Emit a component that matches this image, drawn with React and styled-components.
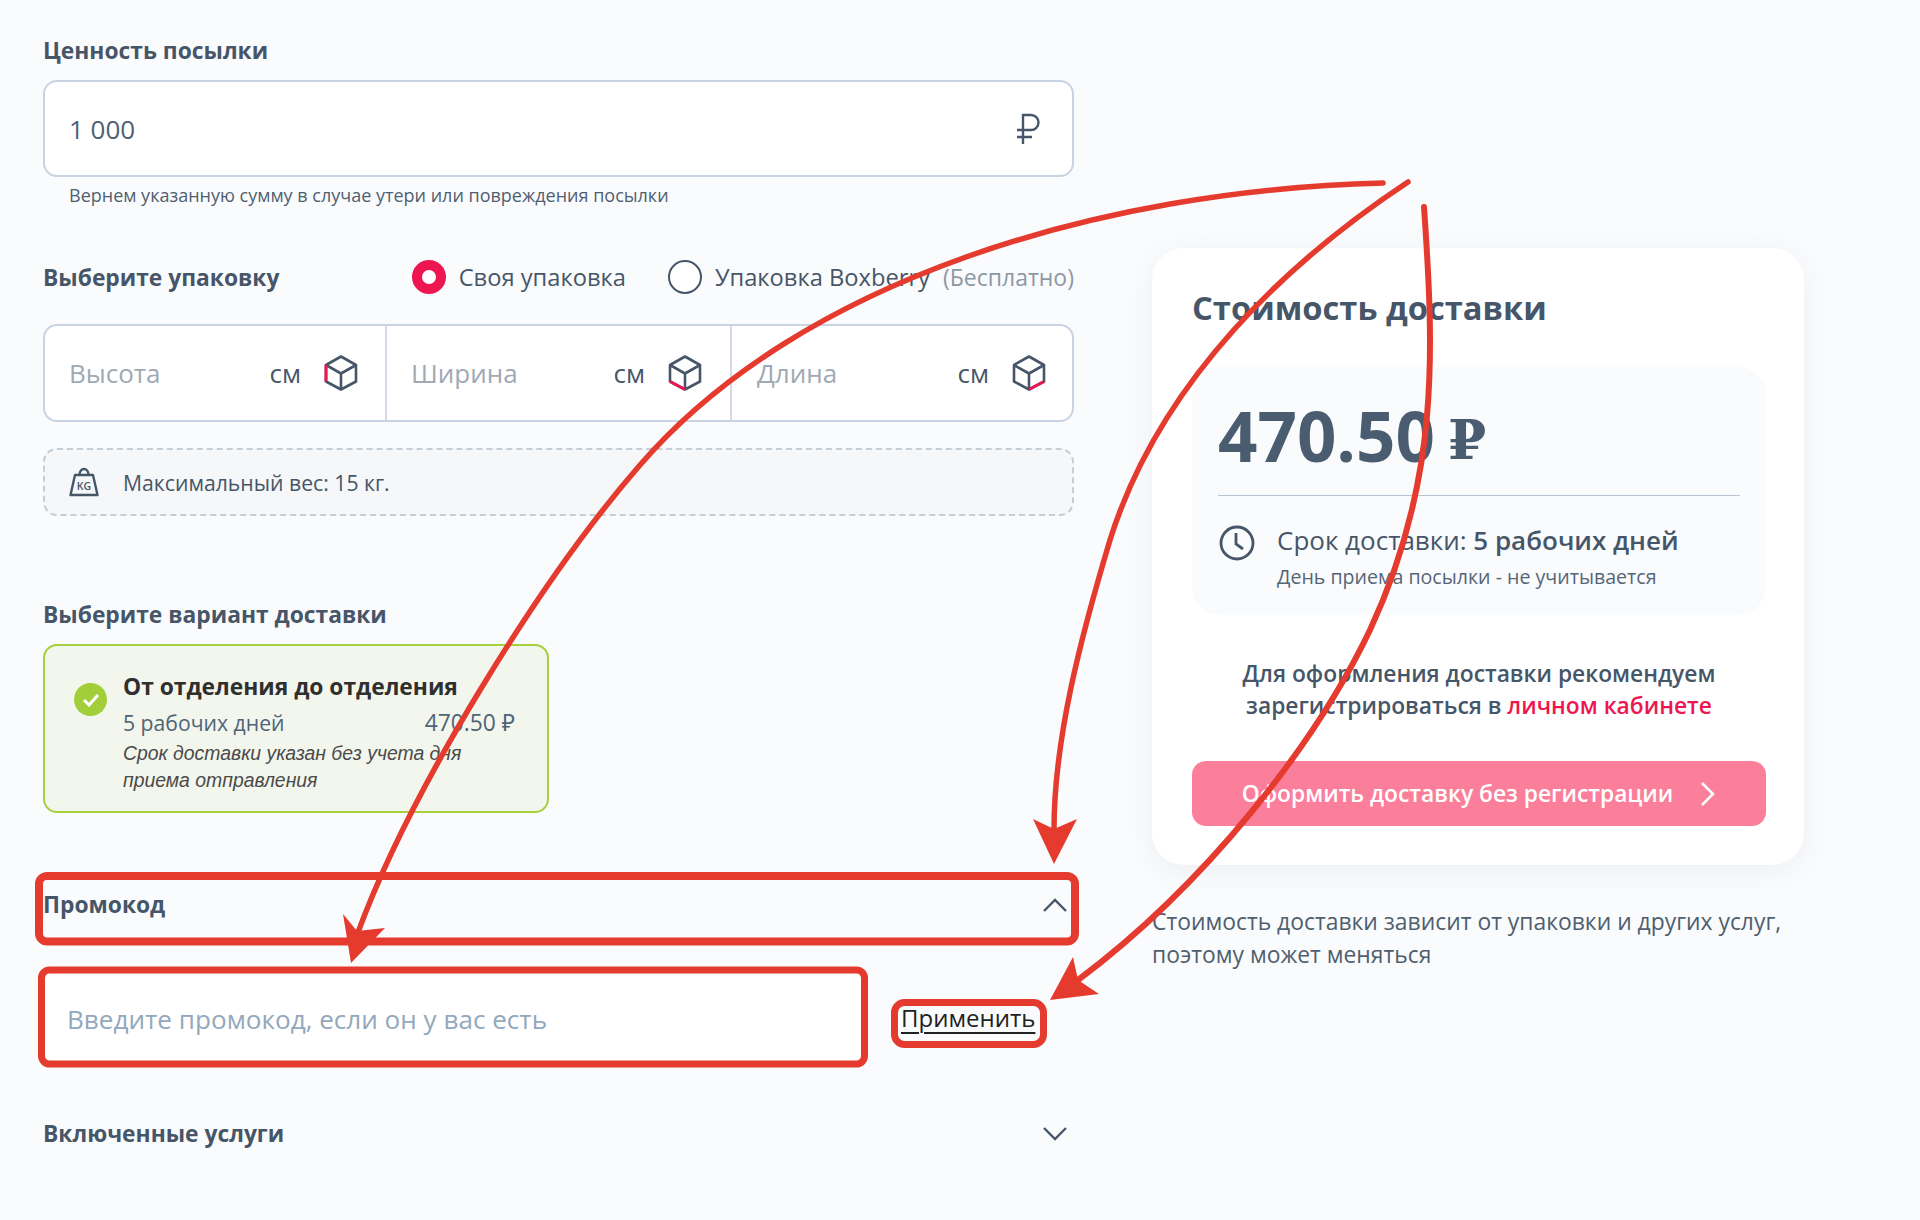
import React from "react";
import styled, { createGlobalStyle } from "styled-components";

const Global = createGlobalStyle`
  html, body { margin: 0; padding: 0; background: #fafbfd; }
  * { box-sizing: border-box; }
  body { font-family: "Open Sans", "Noto Sans", sans-serif; color: #465668; }
`;

const Page = styled.div`
  position: relative;
  width: 1920px;
  height: 1220px;
  overflow: hidden;
  display: flex;
  align-items: flex-start;
  padding: 36px 0 0 43px;
  gap: 78px;
`;
const Left = styled.div`
  width: 1031px;
  display: flex;
  flex-direction: column;
`;
const Right = styled.div`
  width: 652px;
  margin-top: 212px;
  display: flex;
  flex-direction: column;
`;
const Label = styled.div`
  font-size: 22.8px;
  line-height: 30px;
  font-weight: 700;
  color: #465668;
  margin-top: ${(p) => p.$top || 0}px;
`;
const Field = styled.div`
  height: 97px;
  margin-top: 14px;
  background: #fff;
  border: 2px solid #c8d4e2;
  border-radius: 14px;
  padding: 0 32px 0 24px;
  display: flex;
  align-items: center;
  justify-content: space-between;
  font-size: 26px;
  color: #4f5f70;
`;
const Hint = styled.div`
  margin: 6px 0 0 26px;
  font-size: 18px;
  line-height: 24px;
  color: #4f5f70;
`;
const PackRow = styled.div`
  margin-top: 52px;
  height: 36px;
  display: flex;
  align-items: center;
  justify-content: space-between;
`;
const PackLabel = styled(Label)`
  padding-top: 2px;
`;
const Radios = styled.div`
  display: flex;
  align-items: center;
  gap: 42px;
`;
const RadioItem = styled.div`
  display: flex;
  align-items: center;
  gap: 13px;
  font-size: 23.7px;
  color: #465668;
`;
const RadioMark = styled.span`
  width: 34px;
  height: 34px;
  border-radius: 50%;
  border: ${(p) => (p.$on ? "10px solid #ee1650" : "2.5px solid #465668")};
  background: #fff;
`;
const Free = styled.span`
  color: #8c98a6;
  font-size: 23px;
  margin-left: 13px;
`;
const Dims = styled.div`
  margin-top: 29px;
  height: 98px;
  background: #fff;
  border: 2px solid #c8d4e2;
  border-radius: 14px;
  display: grid;
  grid-template-columns: 340px 345px 1fr;
`;
const DimCell = styled.div`
  display: flex;
  align-items: center;
  padding: ${(p) => (p.$last ? "0 26px 0 25px" : p.$first ? "0 27px 0 24px" : "0 28px 0 24px")};
  font-size: 26px;
  border-left: ${(p) => (p.$first ? "none" : "2px solid #d3dce6")};
`;
const DimHolder = styled.span`
  flex: 1;
  color: #a0a9b4;
`;
const DimUnit = styled.span`
  color: #465668;
  margin-right: 23px;
`;
const WeightNote = styled.div`
  margin-top: 26px;
  height: 68px;
  background: #f6f7f9;
  border: 2px dashed #c3ced6;
  border-radius: 14px;
  display: flex;
  align-items: center;
  gap: 24px;
  padding-left: 24px;
  font-size: 21.2px;
  color: #465668;
`;
const DeliveryCard = styled.div`
  margin-top: 14px;
  width: 506px;
  height: 169px;
  background: #f3f6ec;
  border: 2px solid #a6d03f;
  border-radius: 14px;
  display: flex;
  gap: 16px;
  padding: 25px 32px 0 29px;
`;
const Check = styled.div`
  width: 33px;
  height: 33px;
  margin-top: 12px;
  flex: none;
  border-radius: 50%;
  background: #a2ce3a;
  display: flex;
  align-items: center;
  justify-content: center;
`;
const DeliveryBody = styled.div`
  flex: 1;
`;
const DeliveryTitle = styled.div`
  font-size: 22.8px;
  line-height: 32px;
  font-weight: 700;
  color: #2f2f2f;
`;
const DeliveryMeta = styled.div`
  display: flex;
  justify-content: space-between;
  align-items: baseline;
  font-size: 21.2px;
  line-height: 30px;
  margin-top: 5px;
  color: #4f6478;
`;
const DeliveryPrice = styled.span`
  font-size: 22.8px;
`;
const DeliveryNote = styled.div`
  font-family: "Liberation Sans", Arial, sans-serif;
  font-style: italic;
  font-size: 19.4px;
  line-height: 26.5px;
  margin-top: 2px;
  color: #4a4a4a;
`;
const Accordion = styled.div`
  display: flex;
  align-items: center;
  justify-content: space-between;
  margin-top: ${(p) => p.$top}px;
  padding-right: 6px;
`;
const PromoRow = styled.div`
  display: flex;
  align-items: center;
  margin-top: 53px;
  height: 90px;
`;
const PromoInput = styled.div`
  width: 820px;
  height: 90px;
  background: #fff;
  display: flex;
  align-items: center;
  padding: 1px 0 0 24px;
  font-size: 26.1px;
  color: #93a8bc;
`;
const Apply = styled.span`
  margin: -2px 0 0 38px;
  font-size: 24px;
  font-weight: 500;
  color: #222;
  text-decoration: underline;
  text-underline-offset: 5px;
  text-decoration-thickness: 2px;
`;
const Card = styled.div`
  background: #fff;
  border-radius: 32px;
  box-shadow: 0 6px 28px rgba(70, 86, 104, 0.07);
  padding: 38px 38px 39px 40px;
  height: 617px;
`;
const CardTitle = styled.div`
  font-size: 32.7px;
  line-height: 44px;
  font-weight: 700;
  color: #465668;
`;
const Panel = styled.div`
  margin-top: 37px;
  height: 248px;
  background: #fafbfd;
  border-radius: 28px;
  padding: 21px 26px 0;
`;
const Price = styled.div`
  font-size: 69px;
  line-height: 94px;
  font-weight: 700;
  color: #4a5c70;
  padding-bottom: 13px;
  border-bottom: 1px solid #b9c5d2;
`;
const PriceSign = styled.span`
  font-family: "DejaVu Serif", "Liberation Serif", serif;
  font-size: 55px;
  line-height: 1;
  margin-left: 13px;
  vertical-align: 3px;
`;
const Term = styled.div`
  display: flex;
  gap: 22px;
  margin-top: 29px;
  padding-left: 1px;
`;
const TermText = styled.div`
  font-size: 26px;
  line-height: 32px;
  margin-top: -1px;
  color: #465668;
  b { font-weight: 600; }
`;
const TermNote = styled.div`
  font-size: 19.6px;
  line-height: 28px;
  margin-top: 7px;
  color: #566677;
`;
const Recommend = styled.div`
  margin-top: 43px;
  text-align: center;
  font-size: 22.8px;
  line-height: 32px;
  font-weight: 600;
  color: #465668;
  span { color: #ee1650; }
`;
const Button = styled.div`
  margin-top: 39px;
  height: 65px;
  background: #fb7e9a;
  border-radius: 14px;
  color: #fff;
  font-size: 22.8px;
  font-weight: 600;
  display: flex;
  align-items: center;
  justify-content: center;
  gap: 27px;
`;
const Foot = styled.div`
  margin-top: 40px;
  font-size: 22.87px;
  line-height: 33px;
  color: #4f5f70;
`;
const Overlay = styled.svg`
  position: absolute;
  left: 0;
  top: 0;
  pointer-events: none;
`;

const Ruble = () => (
  <svg width="24" height="32" viewBox="0 0 24 32" fill="none" stroke="#465668" strokeWidth="2.4">
    <path d="M7 31V2h8a7.5 7.5 0 0 1 0 15H1M1 24h15" />
  </svg>
);

const Cube = ({ accent }) => (
  <svg width="34" height="36" viewBox="0 0 34 36" fill="none" stroke="#465668" strokeWidth="2.6" strokeLinejoin="round">
    <path d="M17 1.5 32 10v16.5L17 34.5 2 26.5V10ZM2 10l15 8.5L32 10M17 18.5v16" />
    <path d={accent} stroke="#ee1650" strokeWidth="3" />
  </svg>
);

const Chevron = ({ up }) => (
  <svg width="26" height="16" viewBox="0 0 26 16" fill="none" stroke="#465668" strokeWidth="2.4">
    <path d={up ? "M2 14 13 3l11 11" : "M2 2l11 11L24 2"} />
  </svg>
);

const Kg = () => (
  <svg width="30" height="30" viewBox="0 0 30 30" fill="none" stroke="#465668" strokeWidth="2.4" strokeLinejoin="round">
    <path d="M6 8h18l4.500 20H1.500Z" />
    <path d="M10.500 8c0-8 9-8 9 0" />
    <text x="15" y="23" fontSize="10.500" fontFamily="Open Sans" fontWeight="600" textAnchor="middle" fill="#465668" stroke="none">KG</text>
  </svg>
);

const Clock = () => (
  <svg width="36" height="36" viewBox="0 0 36 36" fill="none" stroke="#465668" strokeWidth="2.800" style={{ flex: "none" }}>
    <circle cx="18" cy="18" r="16" />
    <path d="M17 8v11l7 5" />
  </svg>
);

const arrows = [
  { d: "M1383 183C1100 190 800 280 640 465C540 580 410 790 357 935", head: "351,963 343,914 357,931 385,928", w: 5.5 },
  { d: "M1408 182C1290 260 1160 380 1110 540C1080 640 1054 740 1054 830", head: "1054,864 1033,819 1054,829 1077,819", w: 5.5 },
  { d: "M1424 207C1434 350 1440 480 1370 630C1315 745 1205 885 1078 980", head: "1050,1000 1073,957 1078,980 1099,994", w: 6 },
];

const Annotations = () => (
  <Overlay width="1920" height="1220" viewBox="0 0 1920 1220" fill="none">
    <g stroke="#e53b2f" fill="none">
      <rect x="39" y="876" width="1036" height="65.500" rx="8" strokeWidth="8" />
      <rect x="41.500" y="970" width="823" height="94" rx="8" strokeWidth="7" />
      <rect x="894.500" y="1002.500" width="149" height="42" rx="10" strokeWidth="7" />
      {arrows.map((a, i) => (
        <path key={i} d={a.d} strokeWidth={a.w} strokeLinecap="round" />
      ))}
    </g>
    {arrows.map((a, i) => (
      <polygon key={i} points={a.head} fill="#e53b2f" />
    ))}
  </Overlay>
);

export default function App() {
  return (
    <Page>
      <Global />
      <Left>
        <Label>Ценность посылки</Label>
        <Field>
          <span>1 000</span>
          <Ruble />
        </Field>
        <Hint>Вернем указанную сумму в случае утери или повреждения посылки</Hint>
        <PackRow>
          <PackLabel>Выберите упаковку</PackLabel>
          <Radios>
            <RadioItem>
              <RadioMark $on />
              Своя упаковка
            </RadioItem>
            <RadioItem>
              <RadioMark />
              <span>
                Упаковка Boxberry<Free>(Бесплатно)</Free>
              </span>
            </RadioItem>
          </Radios>
        </PackRow>
        <Dims>
          <DimCell $first>
            <DimHolder>Высота</DimHolder>
            <DimUnit>см</DimUnit>
            <Cube accent="M2 10v16.500" />
          </DimCell>
          <DimCell>
            <DimHolder>Ширина</DimHolder>
            <DimUnit>см</DimUnit>
            <Cube accent="M2 26.500l15 8" />
          </DimCell>
          <DimCell $last>
            <DimHolder>Длина</DimHolder>
            <DimUnit>см</DimUnit>
            <Cube accent="M17 34.500l15-8" />
          </DimCell>
        </Dims>
        <WeightNote>
          <Kg />
          Максимальный вес: 15 кг.
        </WeightNote>
        <Label $top={84}>Выберите вариант доставки</Label>
        <DeliveryCard>
          <Check>
            <svg width="18" height="14" viewBox="0 0 18 14" fill="none" stroke="#fff" strokeWidth="3">
              <path d="M2 7l5 5 9-10" />
            </svg>
          </Check>
          <DeliveryBody>
            <DeliveryTitle>От отделения до отделения</DeliveryTitle>
            <DeliveryMeta>
              <span>5 рабочих дней</span>
              <DeliveryPrice>470.50 ₽</DeliveryPrice>
            </DeliveryMeta>
            <DeliveryNote>Срок доставки указан без учета дня приема отправления</DeliveryNote>
          </DeliveryBody>
        </DeliveryCard>
        <Accordion $top={77}>
          <Label>Промокод</Label>
          <Chevron up />
        </Accordion>
        <PromoRow>
          <PromoInput>Введите промокод, если он у вас есть</PromoInput>
          <Apply>Применить</Apply>
        </PromoRow>
        <Accordion $top={56}>
          <Label>Включенные услуги</Label>
          <Chevron />
        </Accordion>
      </Left>
      <Right>
        <Card>
          <CardTitle>Стоимость доставки</CardTitle>
          <Panel>
            <Price>
              470.50<PriceSign>₽</PriceSign>
            </Price>
            <Term>
              <Clock />
              <div>
                <TermText>
                  Срок доставки: <b>5 рабочих дней</b>
                </TermText>
                <TermNote>День приема посылки - не учитывается</TermNote>
              </div>
            </Term>
          </Panel>
          <Recommend>
            Для оформления доставки рекомендуем
            <br />
            зарегистрироваться в <span>личном кабинете</span>
          </Recommend>
          <Button>
            Оформить доставку без регистрации
            <svg width="16" height="26" viewBox="0 0 16 26" fill="none" stroke="#fff" strokeWidth="2.600">
              <path d="M2 2l11 11L2 24" />
            </svg>
          </Button>
        </Card>
        <Foot>
          Стоимость доставки зависит от упаковки и других услуг,
          <br />
          поэтому может меняться
        </Foot>
      </Right>
      <Annotations />
    </Page>
  );
}
